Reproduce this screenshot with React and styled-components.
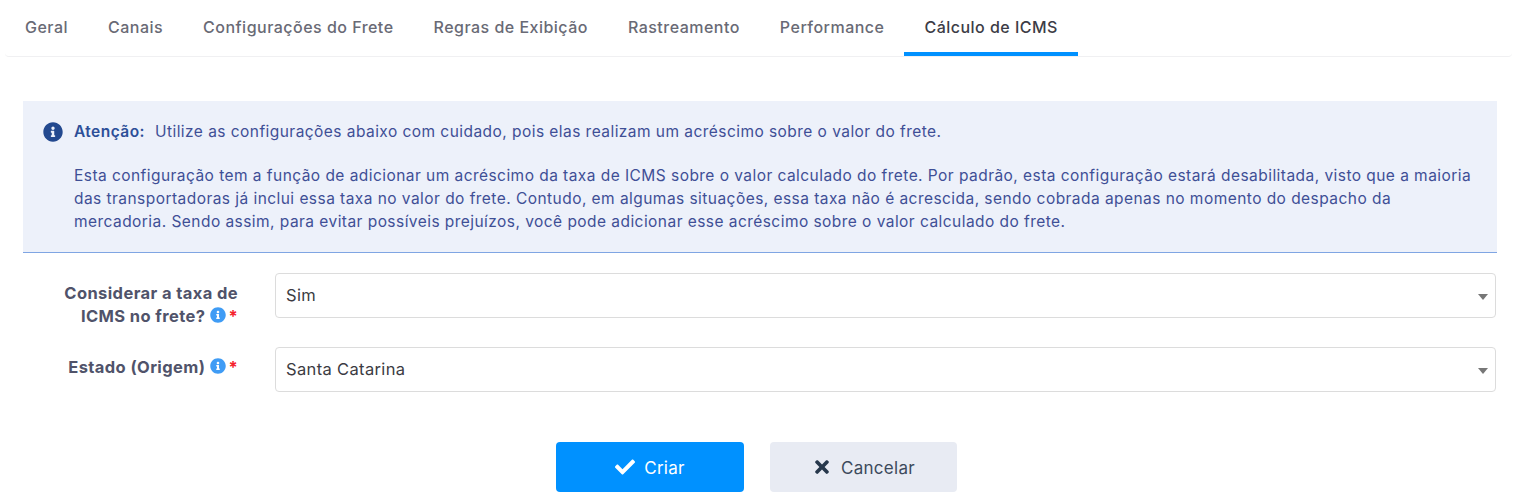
import React from 'react'
import styled, { createGlobalStyle } from 'styled-components'
import { FaCheck, FaTimes, FaInfoCircle } from 'react-icons/fa'

const GlobalStyle = createGlobalStyle`
    html, body {
        margin: 0;
        background: #fff;
        font-family: "Inter", "Open Sans", sans-serif;
    }
`

const Page = styled.div`
    width: 1517px;
    height: 501px;
    overflow: hidden;
    box-sizing: border-box;
`

const TabBar = styled.div`
    display: flex;
    height: 57px;
    box-sizing: border-box;
    margin: 0 5px;
    border-bottom: 1px solid #f0f0f2;
    border-radius: 0 0 4px 4px;
`

const Tab = styled.div`
    display: flex;
    align-items: center;
    height: 56px;
    padding: 2px 20px 0;
    box-sizing: border-box;
    font-size: 16px;
    font-weight: 500;
    letter-spacing: 0.48px;
    color: ${({ $active }) => ($active ? '#3c3c46' : '#696a75')};
    border-bottom: 4px solid ${({ $active }) => ($active ? '#0091ff' : 'transparent')};
    white-space: nowrap;
`

const Content = styled.div`
    padding: 44px 20px 0 23px;
`

const Alert = styled.div`
    display: flex;
    height: 152px;
    box-sizing: border-box;
    padding: 19px 20px 0 20px;
    background: #edf1fa;
    border-bottom: 1px solid #7fa5e3;
    color: #3f4f96;
    font-size: 15.5px;
    letter-spacing: 0.45px;
    line-height: 23px;
`

const AlertIcon = styled(FaInfoCircle)`
    flex: none;
    width: 20px;
    height: 20px;
    margin: 2px 11px 0 0;
    color: #23498f;
`

const AlertBody = styled.div`
    flex: 1;
`

const AlertLine = styled.p`
    margin: 0 0 ${({ $gap }) => $gap || 0}px;
`

const AlertStrong = styled.strong`
    font-weight: 600;
    color: #2c4f98;
    margin-right: 10px;
`

const Form = styled.div`
    display: flex;
    flex-direction: column;
    gap: 29px;
    margin-top: 20px;
    padding-right: 1px;
`

const Row = styled.div`
    display: flex;
    align-items: flex-start;
    height: 45px;
`

const Label = styled.div`
    width: 215px;
    flex: none;
    box-sizing: border-box;
    margin-right: 37px;
    padding: 9px 0 0 30px;
    text-align: right;
    font-size: 16.5px;
    font-weight: 700;
    letter-spacing: 0.4px;
    line-height: 23px;
    color: #50536a;
`

const HelpIcon = styled(FaInfoCircle)`
    width: 16px;
    height: 16px;
    margin-left: 5px;
    vertical-align: -1px;
    color: #3f9cf5;
`

const Required = styled.span`
    margin-left: 2px;
    color: #f5222d;
    font-weight: 700;
`

const Select = styled.div`
    flex: 1;
    position: relative;
    display: flex;
    align-items: center;
    height: 45px;
    box-sizing: border-box;
    padding: 0 10px 2px;
    background: #fff;
    border: 1px solid #dcdcdc;
    border-radius: 4px;
    font-size: 16.5px;
    letter-spacing: 0.35px;
    color: #3b3b42;
`

const Caret = styled.span`
    position: absolute;
    right: 7px;
    top: 20px;
    width: 0;
    height: 0;
    border-left: 5px solid transparent;
    border-right: 5px solid transparent;
    border-top: 6px solid #777;
`

const Actions = styled.div`
    display: flex;
    justify-content: center;
    gap: 26px;
    margin-top: 50px;
    padding-right: 7px;
`

const Button = styled.div`
    display: flex;
    align-items: center;
    justify-content: center;
    gap: 9px;
    height: 50px;
    width: ${({ $primary }) => ($primary ? 188 : 187)}px;
    box-sizing: border-box;
    padding-top: 1px;
    border-radius: 4px;
    font-size: 17px;
    letter-spacing: 0.3px;
    background: ${({ $primary }) => ($primary ? '#0091ff' : '#e8ebf3')};
    color: ${({ $primary }) => ($primary ? '#fff' : '#3c4a5c')};
    svg {
        width: 20px;
        height: 20px;
        margin-top: -2px;
        color: ${({ $primary }) => ($primary ? '#fff' : '#27384c')};
    }
`

const tabs = [
    'Geral',
    'Canais',
    'Configurações do Frete',
    'Regras de Exibição',
    'Rastreamento',
    'Performance',
    'Cálculo de ICMS',
]

const App = () => (
    <Page>
        <GlobalStyle />
        <TabBar>
            {tabs.map((t) => (
                <Tab key={t} $active={t === 'Cálculo de ICMS'}>{t}</Tab>
            ))}
        </TabBar>
        <Content>
            <Alert>
                <AlertIcon />
                <AlertBody>
                    <AlertLine $gap={21}>
                        <AlertStrong>Atenção:</AlertStrong>
                        Utilize as configurações abaixo com cuidado, pois elas realizam um acréscimo sobre o valor do frete.
                    </AlertLine>
                    <AlertLine>
                        Esta configuração tem a função de adicionar um acréscimo da taxa de ICMS sobre o valor calculado do frete. Por padrão, esta configuração estará desabilitada, visto que a maioria das transportadoras já inclui essa taxa no valor do frete. Contudo, em algumas situações, essa taxa não é acrescida, sendo cobrada apenas no momento do despacho da mercadoria. Sendo assim, para evitar possíveis prejuízos, você pode adicionar esse acréscimo sobre o valor calculado do frete.
                    </AlertLine>
                </AlertBody>
            </Alert>
            <Form>
                <Row>
                    <Label>
                        Considerar a taxa de ICMS no frete?<HelpIcon /><Required>*</Required>
                    </Label>
                    <Select>Sim<Caret /></Select>
                </Row>
                <Row>
                    <Label>
                        Estado (Origem)<HelpIcon /><Required>*</Required>
                    </Label>
                    <Select>Santa Catarina<Caret /></Select>
                </Row>
            </Form>
            <Actions>
                <Button $primary><FaCheck />Criar</Button>
                <Button><FaTimes />Cancelar</Button>
            </Actions>
        </Content>
    </Page>
)

export default App
